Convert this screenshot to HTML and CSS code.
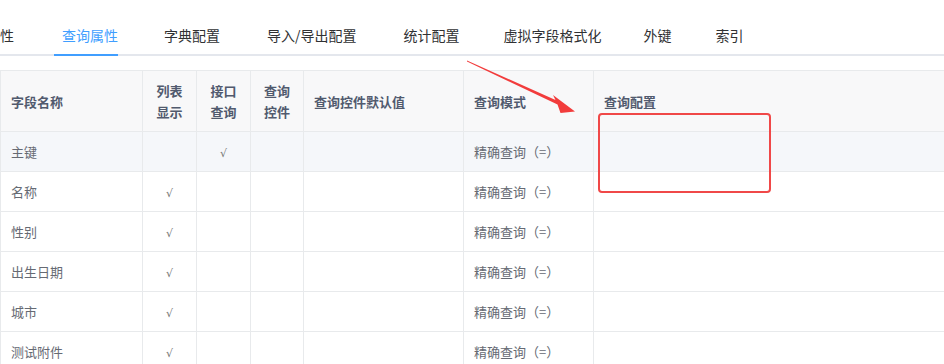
FILE: index.html
```html
<!DOCTYPE html>
<html lang="zh-CN">
<head>
    <meta charset="UTF-8">
    <meta name="viewport" content="width=device-width, initial-scale=1.0">
    <title>查询属性</title>
    <link rel="stylesheet" href="styles.css">
</head>
<body>
    <div class="page">
        <div class="tabs">
            <div class="tab tab-first">性</div>
            <div class="tab active">查询属性</div>
            <div class="tab">字典配置</div>
            <div class="tab tab-wide">导入/导出配置</div>
            <div class="tab">统计配置</div>
            <div class="tab tab-tight">虚拟字段格式化</div>
            <div class="tab tab-tight">外键</div>
            <div class="tab">索引</div>
        </div>

        <div class="table-wrap">
            <table class="grid">
                <colgroup>
                    <col style="width:142px">
                    <col style="width:54px">
                    <col style="width:54px">
                    <col style="width:53px">
                    <col style="width:160px">
                    <col style="width:130px">
                    <col style="width:420px">
                </colgroup>
                <thead>
                    <tr>
                        <th>字段名称</th>
                        <th class="center">列表<br>显示</th>
                        <th class="center">接口<br>查询</th>
                        <th class="center">查询<br>控件</th>
                        <th>查询控件默认值</th>
                        <th>查询模式</th>
                        <th>查询配置</th>
                    </tr>
                </thead>
                <tbody>
                    <tr class="hover">
                        <td>主键</td>
                        <td class="center"></td>
                        <td class="center"><span class="tick">√</span></td>
                        <td></td>
                        <td></td>
                        <td>精确查询（=）</td>
                        <td></td>
                    </tr>
                    <tr>
                        <td>名称</td>
                        <td class="center"><span class="tick">√</span></td>
                        <td></td>
                        <td></td>
                        <td></td>
                        <td>精确查询（=）</td>
                        <td></td>
                    </tr>
                    <tr>
                        <td>性别</td>
                        <td class="center"><span class="tick">√</span></td>
                        <td></td>
                        <td></td>
                        <td></td>
                        <td>精确查询（=）</td>
                        <td></td>
                    </tr>
                    <tr>
                        <td>出生日期</td>
                        <td class="center"><span class="tick">√</span></td>
                        <td></td>
                        <td></td>
                        <td></td>
                        <td>精确查询（=）</td>
                        <td></td>
                    </tr>
                    <tr>
                        <td>城市</td>
                        <td class="center"><span class="tick">√</span></td>
                        <td></td>
                        <td></td>
                        <td></td>
                        <td>精确查询（=）</td>
                        <td></td>
                    </tr>
                    <tr>
                        <td>测试附件</td>
                        <td class="center"><span class="tick">√</span></td>
                        <td></td>
                        <td></td>
                        <td></td>
                        <td>精确查询（=）</td>
                        <td></td>
                    </tr>
                </tbody>
            </table>
        </div>

        <!-- annotation: arrow + highlight box -->
        <svg class="arrow" width="944" height="364" viewBox="0 0 944 364">
            <polygon points="467,60.5 555.5,100 553,95 575,111.5 560.5,113 557.5,104.5 467,61.5" fill="#f23c3c"/>
        </svg>
        <div class="mark-box"></div>
    </div>
</body>
</html>
```

FILE: styles.css
```css
body {
    margin: 0;
    background: #fff;
    font-family: "Microsoft YaHei", "Noto Sans CJK SC", "Noto Sans", sans-serif;
    overflow: hidden;
}

.page {
    position: relative;
    width: 944px;
    height: 364px;
    overflow: hidden;
}

/* tabs */
.tabs {
    display: flex;
    margin-top: 15px;
    height: 39px;
    border-bottom: 2px solid #e4e7ed;
}

.tab {
    position: relative;
    padding: 0 23px;
    line-height: 40px;
    font-size: 14px;
    color: #303133;
    white-space: nowrap;
}

.tab-first {
    padding-left: 0;
    margin-right: 2px;
}

.tab-wide {
    padding: 0 24px;
}

.tab-tight {
    padding: 0 21px;
}

.tab.active {
    color: #409eff;
}

.tab.active::after {
    content: "";
    position: absolute;
    left: 15px;
    right: 23px;
    bottom: -2px;
    height: 2px;
    background: #409eff;
}

/* table */
.table-wrap {
    margin-top: 14px;
    width: 944px;
    overflow: hidden;
}

.grid {
    border-collapse: collapse;
    table-layout: fixed;
    width: 1013px;
    font-size: 13px;
}

.grid th,
.grid td {
    border: 1px solid #e8eaec;
    padding: 0 10px;
    text-align: left;
    vertical-align: middle;
}

.grid th {
    height: 60px;
    background: #f8f8f9;
    color: #515a6e;
    font-weight: 600;
    line-height: 21px;
}

.grid td {
    height: 39px;
    color: #666a73;
}

.grid .center {
    text-align: center;
    padding: 0;
}

.tick {
    font-family: "DejaVu Sans", sans-serif;
    font-size: 11px;
    color: #777;
}

.grid tr.hover td {
    background: #f5f7fa;
}

/* annotation overlays */
.arrow {
    position: absolute;
    left: 0;
    top: 0;
    pointer-events: none;
}

.mark-box {
    position: absolute;
    left: 598px;
    top: 113px;
    width: 169px;
    height: 76px;
    border: 2px solid #f04848;
    border-radius: 4px;
}
```
